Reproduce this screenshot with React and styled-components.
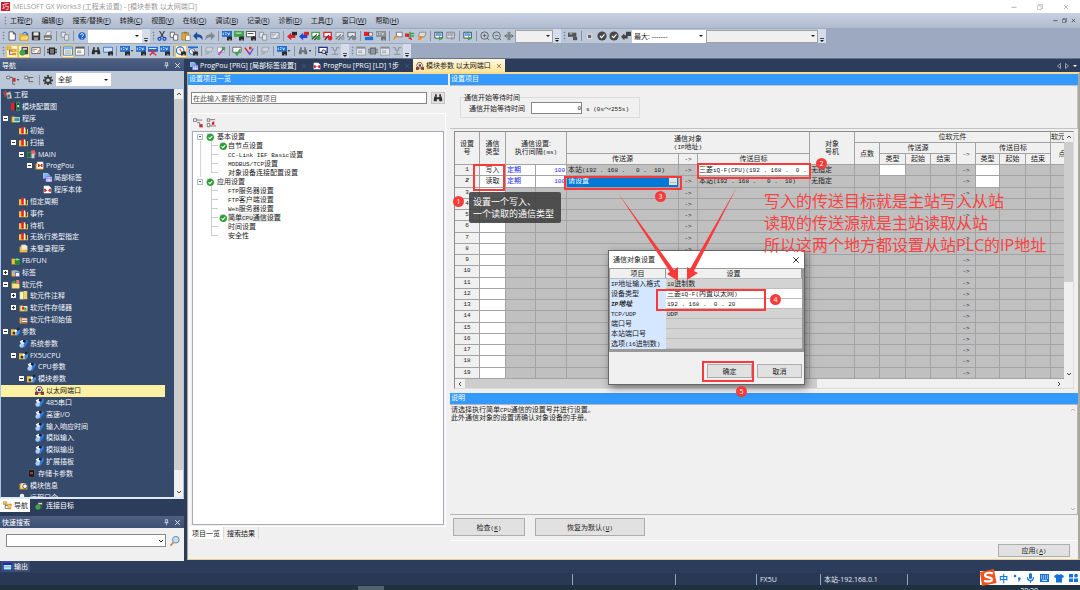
import React from 'react';
import styled, { createGlobalStyle, css } from 'styled-components';

const colors = {
  navy: '#2c3d5c',
  tree: '#364a6c',
  strip: '#bcc7d8',
  face: '#f0f0f0',
  blue: '#3399ff',
  line: '#a3a3a3',
  cell: '#c0c0c0',
  mark: '#f93a3a'
};

const uiFont = '"Open Sans", "Noto Sans CJK SC", sans-serif';
const formFont = '"Liberation Sans", "Noto Sans CJK SC", sans-serif';

const GlobalStyle = createGlobalStyle`
  * { box-sizing: border-box; }
  body { margin: 0; overflow: hidden; font: 7px/9px ${uiFont}; color: #1b1b1b; }
  button, input, select { font: inherit; color: inherit; margin: 0; padding: 0; border-radius: 0; }
  button { border: 0; background: none; cursor: pointer; white-space: nowrap; }
  ul { list-style: none; margin: 0; padding: 0; }
`;

/* ---------- icons ---------- */

const G = '#3fa34a';
const R = '#e0232b';
const B = '#1f6fd0';
const K = '#2d2d2d';
const Y = '#f5c242';

const binoculars = (
  <g fill={K}>
    <path d='M2 4h2.5v6H1V7zM7.5 4H10l1 3v3H7.5zM4.5 5h3v2.5h-3z' />
    <path d='M2.5 1.5h2V4h-2zM7.5 1.5h2V4h-2z' />
  </g>
);
const miniFind = <path d='M6 7h2v-1h1v1h1v-1h1v1h1v4.5h-2V9.5h-1v2H6z' fill={K} />;
const folder = <path d='M1 3.5h4l1 1h5V11H1z' fill={Y} stroke='#b98a1d' strokeWidth='.6' />;
const gear = (
  <g>
    <path d='M5 0h2v2l1.500.6L10 1.500 11 3 9.800 4.200l.5 1.300H12v2h-1.700l-.6 1.400L11 10.300 9.800 11.500 8.400 10.200 7 10.800V12H5v-1.300l-1.400-.5L2.200 11.500 1 10.200 2.200 8.800 1.700 7.500H0v-2h1.700l.6-1.400L1 2.800 2.300 1.500 3.600 2.700 5 2z' fill='#3a3a3a' />
    <circle cx='6' cy='6.300' r='2.200' fill={colors.strip} />
  </g>
);

const glyphs = {
  new: <path d='M2.5 1h5L10 3.500V11H2.5zM7.500 1v2.500H10' fill='#fff' stroke='#444' />,
  open: <g>{folder}<path d='M1 11l2-5h9l-2 5z' fill='#ffdb72' stroke='#b98a1d' strokeWidth='.6' /><path d='M4 4c1-4 5-4 6-1l1-.5-.5 3L8 4l1-.5C8 2 6 2 5 4z' fill={B} /></g>,
  save: <g><path d='M1 1h9l1 1v9H1z' fill='#333' /><path d='M3 1.500h6v4H3z' fill='#e8e8e8' /><path d='M3.500 7.500h5V11h-5z' fill='#999' /></g>,
  print: <g><path d='M3 5l2-4h5L8.500 5z' fill='#fff' stroke='#777' strokeWidth='.7' /><path d='M1 5h9.500l.5 4-2 2H1.500L1 9z' fill='#777' /><path d='M2 8h7v1.500H2z' fill='#eed' /></g>,
  pages: <g fill='#fff' stroke='#555'><path d='M1.500 1.500h5v6h-5z' /><path d='M5.500 4.500h5v6.500h-5z' /></g>,
  help: <g><circle cx='6' cy='6' r='5' fill='#1e5fc4' stroke='#fff' strokeWidth='.6' /><path d='M4.200 4.600C4.500 2.600 8 2.800 7.700 5 7.500 6 6 6 6 7.300M6 8.300v1.200' stroke='#fff' strokeWidth='1.200' fill='none' /></g>,
  cut: <g><path d='M3 0l5 8M9 0L4 8' stroke='#333' strokeWidth='1.300' /><circle cx='3' cy='9.300' r='1.800' fill='none' stroke='#1746c8' strokeWidth='1.500' /><circle cx='9' cy='9.300' r='1.800' fill='none' stroke='#1746c8' strokeWidth='1.500' /></g>,
  paste: <g><path d='M1 2h8v9H1z' fill='#e8a92b' stroke='#8a6419' strokeWidth='.6' /><path d='M3 1h4v2H3z' fill='#777' /><path d='M5.500 5H11v6.500H5.500z' fill='#fff' stroke='#555' strokeWidth='.7' /></g>,
  undo: <path d='M0 6l5-5v3c5 0 7 2.500 6.500 7C10 8 8 7.500 5 7.500V11z' fill='#1c4f9e' />,
  redo: <path d='M12 6L7 1v3C2 4 0 6.500.5 11 2 8 4 7.500 7 7.500V11z' fill='#555' />,
  devBlue: <g><path d='M0 0h12v7H0z' fill={B} /><path d='M1.500 2v3M3.500 2h2M3.500 4h2M7 2l1 3 1-3' stroke='#fff' fill='none' strokeWidth='.9' />{miniFind}</g>,
  devGreen: <g><path d='M0 0h12v7H0z' fill={G} /><path d='M2 2.500h7' stroke='#fff' />{miniFind}</g>,
  devWhite: <g><path d='M.5.5h11V7H.5z' fill='#fff' stroke='#333' /><path d='M2 3h7' stroke='#333' />{miniFind}</g>,
  arrowRed: <g><path d='M0 6.500L5 2v2.500h5v4H5V11z' fill={R} /><path d='M6 1h6v4H6z' fill='#2b2b2b' /></g>,
  arrowBlue: <g><path d='M0 6.500L5 2v2.500h5v4H5V11z' fill='#2444d8' /><path d='M6 1h6v4H6z' fill={R} /></g>,
  monGreen: <g><path d='M1 1.500h9V7H1z' fill='#fff' stroke={G} strokeWidth='1.500' /><path d='M1 10l6-6M4 11l6-6' stroke={K} strokeWidth='1.300' /><circle cx='9' cy='8.500' r='2.500' fill={G} /></g>,
  monRed: <g><path d='M1 1.500h9V7H1z' fill='#fff' stroke={R} strokeWidth='1.500' /><path d='M2 11l5-6' stroke={K} strokeWidth='1.300' /><circle cx='8.500' cy='8.500' r='2.800' fill={R} /></g>,
  redBlue: <g><path d='M0 1h6v5H0z' fill={R} /><path d='M6 2h4v4H6z' fill='#fff' stroke={K} strokeWidth='.7' /><path d='M1 7h10v4H1z' fill={B} /></g>,
  callout: <g><path d='M4 1.500h7V7H4z' fill='#fff' stroke='#666' /><path d='M0 11l2-5 5-1-3 3z' fill='#f28c1e' /></g>,
  plug: <g><path d='M0 3h5v4H0z' fill={R} /><path d='M6 1v8M6 3h5M6 6h5' stroke={G} strokeWidth='1.800' fill='none' /><path d='M3 8l5 3V8z' fill={R} /></g>,
  hand: <g><path d='M3 1.500h8L9 7H2z' fill='#ddd' stroke='#666' strokeWidth='.7' /><path d='M1 11l2-5h5l-3 4z' fill='#f28c1e' /></g>,
  screen: <g><path d='M1 1.500h9v7H1z' fill='#fff' stroke='#333' /><path d='M2 2.500h7v3.500H2z' fill='#5fa8e0' /><path d='M6 6l5 3-5 2.500z' fill={G} /></g>,
  zoomIn: <g fill='none' stroke='#555'><circle cx='5.500' cy='5.500' r='4.500' /><path d='M3.500 5.500h4M5.500 3.500v4M8.500 8.500L11 11' /></g>,
  zoomOut: <g fill='none' stroke='#555'><circle cx='5.500' cy='5.500' r='4.500' /><path d='M3.500 5.500h4M8.500 8.500L11 11' /></g>,
  fit: <g fill='none' stroke='#666' strokeWidth='1.200'><path d='M5 1v10M7 1v10M1 6h4M7 6h4M3 4L1 6l2 2M9 4l2 2-2 2' /></g>,
  camera: <g fill='#555'><path d='M0 2h10v5H0z' /><path d='M6 7h5v4H6z' /><path d='M2 3h3v1H2z' fill='#eee' /></g>,
  stop: <path d='M3 4h5v5H3z' fill='#666' stroke='#eee' />,
  check: <g><circle cx='6' cy='6' r='5.500' fill='#484848' /><path d='M3.500 6l2 2L9 4' stroke='#fff' fill='none' strokeWidth='1.300' /></g>,
  keys: <path d='M0 7l4-4v2h2V1h6v5H8v3H4v2z' fill='#444' />,
  nav: <g><path d='M0 1h5v3.500H0zM6 4h5v3H6z' fill={Y} stroke='#a87812' strokeWidth='.6' /><path d='M6 8.500h5V11H6z' fill='#d9902a' /><path d='M3 4.500V10h3M3 6h3' stroke='#444' fill='none' strokeWidth='.9' /></g>,
  link: <g><path d='M3 1h8v9H3z' fill='#444' /><path d='M4.500 2.500h5v2h-5z' fill='#ddd' /><circle cx='4' cy='8' r='3.500' fill={G} /></g>,
  note: <g><path d='M1 2h10v7H1z' fill='#fff' stroke='#555' /><path d='M2 4h5M2 6h3' stroke='#777' /><path d='M7 8l3-4 1 1-3 4z' fill='#f28c1e' /></g>,
  chip: <g><path d='M3 2.500h6v7H3z' fill='#777' stroke='#222' strokeWidth='1.300' /><path d='M0 4h3M0 6h3M0 8h3M9 4h3M9 6h3M9 8h3' stroke='#222' /></g>,
  list: <g><path d='M.5 1h11v10H.5z' fill='#fff' stroke={B} /><path d='M1 1.500h10v2.500H1z' fill='#7db7ee' /><path d='M2 6h8M2 8.500h8' stroke='#777' /></g>,
  list2: <g><path d='M.5 1h11v10H.5z' fill='#fff' stroke='#777' /><path d='M1 1.500h10V3H1z' fill='#333' /><path d='M2.500 6h5M2.500 8h5' stroke='#777' /></g>,
  bino: binoculars,
  binoList: <g><path d='M.5 1.500h11v6H.5z' fill='#cfe4f8' stroke={B} />{miniFind}</g>,
  devRed: <g><path d='M0 1h12v6H0z' fill={B} /><path d='M1 3h9' stroke='#fff' /><path d='M2 5l8 6M9 5l-7 6' stroke={R} strokeWidth='1.500' /></g>,
  clock: <g><circle cx='5' cy='5.500' r='4.500' fill='#fff' stroke={B} strokeWidth='1.300' /><path d='M5 3v3h2' stroke={R} fill='none' />{miniFind}</g>,
  clockList: <g><path d='M0 .5h12v2H0z' fill={B} /><circle cx='5' cy='6.500' r='3.500' fill='#fff' stroke={B} strokeWidth='1.200' /><path d='M5 4.500v2.500h2' stroke={R} fill='none' />{miniFind}</g>,
  pencil: <g><path d='M2 1.500h8v6H2z' fill='#fff' stroke='#a9b' /><path d='M2 10l6-7 2 1-6 7z' fill='#b94fc0' /><path d='M7 1h4v4H7z' fill={G} /></g>,
  tick: <g><path d='M1 1.500h10v6H1z' fill='#fff' stroke='#555' /><path d='M4 8l2 2.500L10 4' stroke={G} strokeWidth='2.200' fill='none' /></g>,
  cross: <g><path d='M1 2l6 8' stroke={R} strokeWidth='1.800' /><path d='M5 7l2 3 4-7' stroke='#6a4fd0' strokeWidth='1.600' fill='none' /><path d='M6 1h3v3H6z' fill={R} /></g>,
  find: <g><path d='M1 1.500h10v6H1z' fill='#fff' stroke='#26307c' strokeWidth='1.500' /><circle cx='7' cy='7' r='2.300' fill='#cde' stroke={K} /><path d='M8.500 8.500L11 11' stroke={K} strokeWidth='1.500' /></g>,
  steps: <path d='M1 2h3v3h4V2h3M6 5v5M2 10h8' fill='none' stroke='#555' />,
  treeRed: <g fill='none' stroke='#555'><path d='M1 1.500h3.500v3H1z' fill='#fff' /><path d='M5 3h3v8h3M8 7h2' /><path d='M8.500 3.500h3V8h-3z' fill={R} stroke='none' /></g>,
  treeGrey: <g fill='none' stroke='#555'><path d='M1 1.500h3.500v3H1z' fill='#fff' /><path d='M5 3h6M6 3v5h5' /></g>,
  expandAll: <g fill='none' stroke='#666'><path d='M.5 1h4v3h-4z' fill='#fff' /><path d='M5 2.500h6M5 5.500h3v5h4M8 8h3' /><path d='M8 7.500h3.500V11H8z' fill={R} stroke='none' /></g>,
  collapseAll: <g fill='none' stroke='#666'><path d='M1.500 1h3v3h-3zM1.500 6.500h3v4h-3z' fill='#fff' /><path d='M5 2h6M5 9.500h7' /><path d='M7 5l3-1v4L7 8z' fill={R} stroke='none' /></g>,
  gear,
  root: <g><path d='M0 3l4-3 2 7-3 3z' fill='#a44' /><path d='M4 4l6-2 2 9-6 1z' fill='#ccc' stroke='#666' strokeWidth='.6' /><path d='M6 6h3v4H6z' fill='#556' /></g>,
  modules: <g><path d='M0 1h5v10H0z' fill={R} /><path d='M5 1h2v10H5z' fill='#111' /><path d='M7 1h5v10H7z' fill='#153' stroke='#6d9' strokeWidth='.7' /><path d='M8.500 4h2v3h-2z' fill='#fff' /></g>,
  program: <g>{folder}<path d='M4 5h8v5H4z' fill='#2b9aac' stroke='#dff' strokeWidth='.9' /></g>,
  books: <g><path d='M0 3h4l1 1h7v7H0z' fill={Y} /><path d='M3 1h3.500v9H3z' fill={R} /><path d='M6.500 2h2v8h-2z' fill='#fff' /><path d='M9 3h1.500v7H9z' fill='#333' /></g>,
  main: <g><path d='M0 3h5v7H0z' fill='#163' stroke='#6b8' strokeWidth='.6' /><path d='M5 1l5-1 2 6-5 2z' fill='#e66' /><path d='M6 5h4v6H6z' fill='#ccc' /></g>,
  pou: <g>{folder}<path d='M3 1h8v9H3z' fill='#fff' /><path d='M4 4h2v4H4zM8 4h2v4H8zM6 5.500h2v1H6z' fill={R} /></g>,
  label: <g><path d='M0 0h6l3 3.500L6 7H0z' fill='#7fb4ec' stroke='#dff' strokeWidth='.5' /><path d='M4 5h8v7H4z' fill='#fff' stroke='#66e' /><path d='M4 7.500h8M6.500 5v7M9.500 5v7' stroke='#66e' strokeWidth='.8' /></g>,
  body: <g><path d='M1 1h7l3 3v7H1z' fill='#fff' /><path d='M1.500 5H4v4H1.500zM8 5h2.500v4H8zM4 6.500h1.500v1H4zM6.500 6.500H8v1H6.500z' fill={R} /></g>,
  folder: <g>{folder}<path d='M3 1h6l2 2v5H3z' fill='#f6efd8' stroke='#998' strokeWidth='.5' /></g>,
  fb: <g>{folder}<path d='M5 5l3-2 4 2v5l-4 2-3-2z' fill='#1d8a3a' /><path d='M5 5l3 1 4-1-4-2z' fill='#8d8' /></g>,
  labels: <g>{folder}<path d='M3 3h5l3 3-2 2H3z' fill='#7fb4ec' /><path d='M6 6h5.500v5.500H6z' fill='#fff' stroke='#33c' strokeWidth='.8' /></g>,
  device: <g>{folder}<path d='M2 1h4v4H2z' fill={G} /><path d='M7 0h4v4H7z' fill='#e77' /><path d='M2 5h9v6H2z' fill='#f9e38b' /></g>,
  comment: <g><path d='M1 1h5v10H1z' fill='#fff6c0' stroke='#a98' strokeWidth='.5' /><path d='M6 0h5v11H6z' fill='#f3d266' /></g>,
  memory: <g>{folder}<path d='M3 4h8v6H3z' fill='#eee' /><path d='M4 5h3v4H4z' fill={R} /><path d='M7 6h3v4H7z' fill={G} /></g>,
  initial: <g>{folder}<path d='M3 4h8v6H3z' fill='#fff' stroke='#a33' strokeWidth='.9' /><path d='M4 7h6' stroke='#333' /></g>,
  params: <g><path d='M0 3h4l1 1h3v7H0z' fill={Y} /><path d='M5 3l3 1-1 5-3-1z' fill='#fff' /><path d='M7 6l5-2v4l-4 4z' fill='#3d8af0' /><path d='M8 1h3v3H8z' fill='#222' /><circle cx='4' cy='8' r='2' fill='#333' /></g>,
  param: <g><path d='M6 4l5-3 1 3-5 8-2-2z' fill='#2f7be6' /><path d='M1 3l4-2 2 5-3 3z' fill='#f1f5ff' /><circle cx='3.500' cy='8.500' r='3' fill='#a9cdf5' /><circle cx='7' cy='3' r='1.800' fill='#1a1a1a' /></g>,
  ether: <g><path d='M3 1h5l2 4-2 4H3L1 5z' fill='#fff' stroke='#843' strokeWidth='1.300' /><path d='M0 8h4v3.500H0zM8 8h4v3.500H8z' fill='#a33' stroke='#333' strokeWidth='.6' /><path d='M4 3.500h3.500v3.500H4z' fill='#444' /></g>,
  card: <g><path d='M2 1h8v10H2z' fill='#1a1a1a' stroke='#777' strokeWidth='.6' /><path d='M4 4h4v3H4z' fill='#944' /></g>,
  info: <g>{folder}<path d='M3 3h6v6H3z' fill='#eee' /><circle cx='8' cy='7' r='3' fill='#fff' stroke='#333' /></g>,
  key: <g><circle cx='4' cy='4' r='3' fill='#eee' /><path d='M5 6l5 5' stroke='#eee' strokeWidth='2' /><path d='M7 6h4v3H7z' fill={G} /></g>,
  ok: <g><path d='M1 0h8v9H1z' fill='#ddd' /><circle cx='6.500' cy='6.500' r='5.500' fill='#2e9e3c' /><path d='M3.800 6.500l2 2 3.500-3.800' stroke='#fff' fill='none' strokeWidth='1.600' /></g>,
  window: <g><path d='M0 1h12v10H0z' fill='#22c' /><path d='M1 4h10v6H1z' fill='#9ff' /><path d='M1 6.500h10' stroke='#c66' /></g>,
  search: <g><circle cx='7' cy='4.500' r='4' fill='#bfe0f7' stroke='#789' strokeWidth='1.200' /><path d='M4 8l-3.500 3.500' stroke='#c98a54' strokeWidth='2.200' /></g>,
  pin: <path d='M4 1h4v5H4zM2.500 6.500h7M6 7v4M7 1v5' fill='none' stroke='#dfe5ef' strokeWidth='1.100' />,
  close: <path d='M2 2l8 8M10 2l-8 8' stroke='currentColor' strokeWidth='1.400' />,
  minimize: <path d='M1 6.500h10' stroke='currentColor' strokeWidth='1.500' />,
  restore: <path d='M1 3.500h7.500V11H1zM3 3.500V1h8v8H8.500' fill='none' stroke='currentColor' />,
  down: <path d='M2 4h8L6 8z' fill='currentColor' />,
  more: <path d='M2 2h8v1.500H2zM2 6h8l-4 4z' fill='currentColor' />,
  up: <path d='M2 8l4-4 4 4' fill='none' stroke='currentColor' strokeWidth='2' />,
  chevron: <path d='M2 4l4 4 4-4' fill='none' stroke='currentColor' strokeWidth='2' />,
  left: <path d='M8 2L4 6l4 4' fill='none' stroke='currentColor' strokeWidth='2' />,
  right: <path d='M4 2l4 4-4 4' fill='none' stroke='currentColor' strokeWidth='2' />,
  triLeft: <path d='M9 1v10L3 6z' fill='none' stroke='currentColor' />,
  triRight: <path d='M3 1v10l6-5z' fill='none' stroke='currentColor' />
};

const Svg = styled.svg`
  display: block;
  flex: none;
  width: ${props => props.$size}px;
  height: ${props => props.$size}px;
  ${props => props.$dim && 'filter: grayscale(1); opacity: .55;'}
`;

const Icon = ({ name, size = 10, dim }) => (
  <Svg viewBox='0 0 12 12' $size={size} $dim={dim} aria-hidden='true'>{glyphs[name]}</Svg>
);

/* ---------- half-width latin inside chinese text ---------- */

const Half = styled.span`
  font-family: "Liberation Mono", monospace;
  font-size: 6px;
  line-height: 6px;
  white-space: pre;
`;

const Mixed = ({ text }) => text.split(/([\x20-\x7e]+)/).filter(Boolean).map((part, i) => (
  /[\x20-\x7e]/.test(part) ? <Half key={i}>{part}</Half> : <React.Fragment key={i}>{part}</React.Fragment>
));

/* ---------- frame ---------- */

const Window = styled.div`
  position: relative;
  display: flex;
  flex-direction: column;
  height: 100vh;
  background: ${colors.navy};
  overflow: hidden;
  white-space: nowrap;
`;

const TitleBar = styled.header`
  display: flex;
  align-items: center;
  gap: 3px;
  height: 13px;
  flex: none;
  padding: 0 11px 0 1px;
  background: #fff;
  color: #999;
`;

const AppBadge = styled.span`
  display: grid;
  place-items: center;
  width: 9px;
  height: 9px;
  background: #c8202f;
  color: #fff;
`;

const WindowButtons = styled.div`
  display: flex;
  align-items: center;
  margin-left: auto;
  gap: ${props => props.$gap}px;
`;

const MenuBar = styled.nav`
  display: flex;
  align-items: center;
  gap: 9px;
  height: 15px;
  flex: none;
  padding: 0 4px 0 2px;
  background: linear-gradient(#c8d1e0, #b0bbcf);
`;

const Grip = styled.span`
  flex: none;
  width: 6px;
  height: 10px;
  background: radial-gradient(circle, #7b8799 40%, transparent 50%) 50% 0 / 3px 3px repeat-y;
`;

const Toolbars = styled.div`
  display: flex;
  flex-direction: column;
  align-items: flex-start;
  gap: 1px;
  height: 31px;
  flex: none;
  padding: 1px 0;
  background: #9ca9c1;
  border-bottom: 1px solid #66738e;
`;

const Toolbar = styled.div`
  display: flex;
  align-items: center;
  height: 14px;
  background: ${colors.strip};
`;

const ToolButton = styled.button`
  display: flex;
  align-items: center;
  justify-content: center;
  width: ${props => (props.$menu ? 17 : 12)}px;
  height: 13px;
  ${props => props.$active && css`
    background: #fff3cc;
    box-shadow: inset 0 0 0 1px #e5c365;
  `}
`;

const Separator = styled.span`
  width: 1px;
  height: 10px;
  margin: 0 ${props => props.$after}px 0 2px;
  background: #8592a8;
`;

const Overflow = styled.button`
  display: flex;
  align-items: flex-end;
  justify-content: center;
  width: 8px;
  height: 14px;
  background: #d5dcea;
`;

const ComboBox = styled.div`
  position: relative;
  display: flex;
  align-items: center;
  width: ${props => (props.$width ? props.$width + 'px' : 'auto')};
  flex: ${props => (props.$width ? 'none' : '1')};
  height: 13px;
  background: ${props => (props.$grey ? colors.face : '#fff')};
  border: 1px solid ${props => (props.$grey ? '#a0a0a0' : props.$edge || '#fff')};

  select {
    width: 100%;
    height: 100%;
    appearance: none;
    border: 0;
    background: none;
    padding-left: 1px;
    outline: none;
  }
  svg {
    position: absolute;
    right: 1px;
    pointer-events: none;
  }
`;

const Combo = ({ label, value = '', icon = 'down', ...rest }) => (
  <ComboBox {...rest}>
    <select aria-label={label}><option>{value}</option></select>
    <Icon name={icon} size={6} />
  </ComboBox>
);

// * pressed, ~ disabled, > has a menu
const Tools = ({ items, gap = 2 }) => items.split(' ').map((item, i) => {
  if (item === '|') return <Separator key={i} $after={gap} />;
  const name = item.replace(/[*~>]/g, '');
  const menu = item.includes('>');
  return (
    <ToolButton key={i} $active={item.includes('*')} $menu={menu} aria-label={name}>
      <Icon name={name} size={10} dim={item.includes('~')} />
      {menu && <Icon name='down' size={4} />}
    </ToolButton>
  );
});

const More = () => <Overflow aria-label='more'><Icon name='more' size={6} /></Overflow>;

const Workspace = styled.div`
  display: flex;
  gap: 3px;
  flex: 1;
  min-height: 0;
`;

/* ---------- navigation ---------- */

const Sidebar = styled.aside`
  display: flex;
  flex-direction: column;
  width: 184px;
  flex: none;
`;

const PanelHeader = styled.div`
  display: flex;
  align-items: center;
  gap: 4px;
  height: 12px;
  flex: none;
  padding: 0 3px 0 2px;
  background: linear-gradient(#4d6082, #3e5075);
  color: #fff;

  span { flex: 1; }
`;

const NavTools = styled.div`
  display: flex;
  align-items: center;
  gap: 2px;
  height: 17px;
  flex: none;
  padding: 0 4px;
  background: ${colors.strip};
`;

const TreeFrame = styled.div`
  display: flex;
  flex: 1;
  min-height: 0;
  border: 1px solid #a9c3e8;
  border-bottom: 2px solid #dfe9f7;
  background: ${colors.tree};
`;

const TreeView = styled.div`
  flex: 1;
  min-height: 0;
  overflow: hidden;
`;

const NavTree = styled.ul`
  display: grid;
  grid-auto-rows: 1fr;
  height: calc(100% + 6px);
  color: #f2f5fa;
`;

const NavItem = styled.li`
  display: flex;
  align-items: center;
  gap: 2px;
  margin-right: 9px;
  padding-left: ${props => 2 + 8 * Math.max(0, props.$level - 1)}px;
  ${props => props.$selected && 'background: #fff1a4; color: #222;'}
`;

const Expander = styled.span`
  flex: none;
  width: 5px;
  height: 5px;
  margin-right: 1px;
  ${props => props.$open !== undefined && css`
    background:
      linear-gradient(#333, #333) center / 3px 1px no-repeat,
      linear-gradient(#333, #333) center / 1px ${props.$open ? 1 : 3}px no-repeat,
      #fff;
  `}
`;

// [level, icon, text, open]
const navRows = [
  [0, 'root', '工程'],
  [1, 'modules', '模块配置图'],
  [1, 'program', '程序', true],
  [2, 'books', '初始'],
  [2, 'books', '扫描', true],
  [3, 'main', 'MAIN', true],
  [4, 'pou', 'ProgPou', true],
  [5, 'label', '局部标签'],
  [5, 'body', '程序本体'],
  [2, 'books', '恒定周期'],
  [2, 'books', '事件'],
  [2, 'books', '待机'],
  [2, 'books', '无执行类型指定'],
  [2, 'folder', '未登录程序'],
  [1, 'fb', 'FB/FUN'],
  [1, 'labels', '标签', false],
  [1, 'device', '软元件', true],
  [2, 'comment', '软元件注释', false],
  [2, 'memory', '软元件存储器', false],
  [2, 'initial', '软元件初始值'],
  [1, 'params', '参数', true],
  [2, 'param', '系统参数'],
  [2, 'params', 'FX5UCPU', true],
  [3, 'param', 'CPU参数'],
  [3, 'params', '模块参数', true],
  [4, 'ether', '以太网端口'],
  [4, 'param', '485串口'],
  [4, 'param', '高速I/O'],
  [4, 'param', '输入响应时间'],
  [4, 'param', '模拟输入'],
  [4, 'param', '模拟输出'],
  [4, 'param', '扩展插板'],
  [3, 'card', '存储卡参数'],
  [2, 'info', '模块信息'],
  [2, 'key', '远程口令']
];

const ScrollBar = styled.div`
  display: flex;
  flex-direction: ${props => (props.$horizontal ? 'row' : 'column')};
  align-items: center;
  gap: 2px;
  flex: none;
  ${props => (props.$horizontal ? 'height: 9px; padding: 0 2px; margin-right: 9px;' : 'width: 9px; padding: 2px 0;')}
  background: ${colors.face};
  color: ${props => (props.$faint ? '#bbb' : '#444')};
`;

const Thumb = styled.span`
  flex: ${props => props.$grow};
  align-self: stretch;
  background: #cdcdcd;
`;

const Track = styled.span`
  flex: ${props => props.$grow};
`;

const Scroll = ({ thumb = 0, horizontal, faint }) => (
  <ScrollBar $horizontal={horizontal} $faint={faint}>
    <Icon name={horizontal ? 'left' : 'up'} size={6} />
    {thumb > 0 && <Thumb $grow={thumb} />}
    {thumb < 100 && <Track $grow={100 - thumb} />}
    <Icon name={horizontal ? 'right' : 'chevron'} size={6} />
  </ScrollBar>
);

const BottomTabs = styled.div`
  display: flex;
  height: 13px;
  flex: none;
  margin-bottom: 4px;
`;

const BottomTab = styled.button`
  display: flex;
  align-items: center;
  gap: 2px;
  padding: 0 2px 0 3px;
  margin-right: 2px;
  background: ${props => (props.$active ? '#fff' : 'none')};
  color: ${props => (props.$active ? '#222' : '#fff')};
`;

const QuickSearch = styled.form`
  display: flex;
  align-items: flex-start;
  gap: 3px;
  height: 33px;
  flex: none;
  padding: 6px 3px 0 6px;
  background: ${colors.face};
`;

const NavPanel = () => (
  <Sidebar>
    <PanelHeader><span>导航</span><Icon name='pin' size={7} /><Icon name='close' size={7} /></PanelHeader>
    <NavTools>
      <Tools items='treeRed> treeGrey' />
      <Separator $after={0} />
      <Tools items='gear' />
      <Combo label='显示对象' value='全部' $width={55} />
    </NavTools>
    <TreeFrame>
      <TreeView>
        <NavTree>
          {navRows.map(([level, icon, text, open]) => (
            <NavItem key={text} $level={level} $selected={text === '以太网端口'}>
              {level > 0 && <Expander $open={open} />}
              <Icon name={icon} size={9} />
              {text}
            </NavItem>
          ))}
        </NavTree>
      </TreeView>
      <Scroll thumb={96} />
    </TreeFrame>
    <BottomTabs>
      <BottomTab $active><Icon name='nav' size={9} />导航</BottomTab>
      <BottomTab><Icon name='link' size={9} />连接目标</BottomTab>
    </BottomTabs>
    <PanelHeader><span>快速搜索</span><Icon name='pin' size={7} /><Icon name='close' size={7} /></PanelHeader>
    <QuickSearch>
      <Combo label='快速搜索' icon='chevron' $edge='#888' />
      <ToolButton type='button' aria-label='搜索'><Icon name='search' size={10} /></ToolButton>
    </QuickSearch>
  </Sidebar>
);

/* ---------- document area ---------- */

const Documents = styled.main`
  display: flex;
  flex-direction: column;
  flex: 1;
  min-width: 0;
  padding-bottom: 1px;
`;

const DocTabs = styled.div`
  display: flex;
  height: 13px;
  flex: none;
  padding-right: 2px;
  color: #fff;
`;

const DocTab = styled.button`
  display: flex;
  align-items: center;
  gap: 2px;
  height: 13px;
  padding: 0 3px;
  ${props => props.$active && 'background: linear-gradient(#fff8e0, #fde59b); color: #222;'}

  > :last-child { margin-left: 3px; color: ${props => (props.$active ? '#6d5a2a' : '#485a7c')}; }
`;

const Page = styled.section`
  display: flex;
  flex-direction: column;
  flex: 1;
  min-height: 0;
  background: ${colors.face};
  border: 1px solid #aaa79b;
  border-width: 1px 2px 1px 1px;
  border-top: 2px solid #f7dc92;
  border-bottom-color: #e8cf83;
  font-family: ${formFont};
`;

const Panes = styled.div`
  display: flex;
  gap: 2px;
  flex: 1;
  min-height: 0;
`;

const BlueTitle = styled.h2`
  height: 11px;
  flex: none;
  margin: 0;
  padding: 0 1px;
  background: ${colors.blue};
  color: #fff;
  font-size: 7px;
  line-height: 10px;
  font-weight: 400;
`;

const ItemPane = styled.div`
  display: flex;
  flex-direction: column;
  width: 260px;
  flex: none;
`;

const SearchRow = styled.div`
  display: flex;
  align-items: center;
  gap: 4px;
  padding: 7px 3px 9px 3px;

  input {
    flex: 1;
    height: 12px;
    padding: 0 1px;
    border: 1px solid #858585;
    background: #fff;
    outline: none;
  }
  input::placeholder { color: #555; opacity: 1; }
`;

const FindButton = styled.button`
  display: grid;
  place-items: center;
  width: 14px;
  height: 12px;
  background: #e1e1e1;
  border: 1px solid #c4c4c4;
`;

const TabPage = styled.div`
  display: flex;
  flex-direction: column;
  flex: 1;
  min-height: 0;
  margin: 0 2px 0 1px;
  padding: 0 1px 1px 2px;
  border: 1px solid #fff;
`;

const ItemTools = styled.div`
  display: flex;
  align-items: center;
  gap: 1px;
  height: 17px;
`;

const SettingTree = styled.ul`
  flex: 1;
  border: 1px solid #a7abb3;
  background: #fff;
`;

const SettingItem = styled.li`
  display: flex;
  align-items: center;
  height: 9px;
  padding-left: ${props => (props.$root ? 4 : 7)}px;
  gap: ${props => (props.$root ? 3 : 0)}px;
`;

const Knob = styled.span`
  width: 6px;
  height: 6px;
  border: 1px solid #b4bcc8;
  background: linear-gradient(#456, #456) center / 2px 1px no-repeat #fff;
`;

const Rail = styled.span`
  width: 11px;
  height: 9px;
  border-left: 1px solid ${props => (props.$line ? '#d5d5d5' : 'transparent')};
`;

const Branch = styled.span`
  width: 8px;
  height: 9px;
  background:
    linear-gradient(#ccc, #ccc) 0 50% / 7px 1px no-repeat,
    linear-gradient(#ccc, #ccc) 0 0 / 1px ${props => (props.$last ? '50%' : '100%')} no-repeat;
`;

const StateSlot = styled.span`
  width: 9px;
`;

const ItemText = styled.span`
  background: ${props => (props.$current ? '#ececec' : 'none')};
`;

const groups = [
  { title: '基本设置', items: ['自节点设置', 'CC-Link IEF Basic设置', 'MODBUS/TCP设置', '对象设备连接配置设置'] },
  { title: '应用设置', items: ['FTP服务器设置', 'FTP客户端设置', 'Web服务器设置', '简单CPU通信设置', '时间设置', '安全性'] }
];
const configured = ['自节点设置', '简单CPU通信设置'];

const PageTabs = styled.div`
  display: flex;
  height: 12px;
  flex: none;
  margin: 0 0 20px 1px;
`;

const PageTab = styled.button`
  padding: 0 3px;
  background: ${props => (props.$active ? '#fff' : 'none')};
  border-right: 1px solid #dadada;
`;

const SettingList = () => (
  <ItemPane>
    <BlueTitle>设置项目一览</BlueTitle>
    <SearchRow>
      <input aria-label='搜索设置项目' placeholder='在此输入要搜索的设置项目' />
      <FindButton aria-label='查找'><Icon name='bino' size={10} /></FindButton>
    </SearchRow>
    <TabPage>
      <ItemTools><Tools items='expandAll collapseAll' /></ItemTools>
      <SettingTree>
        {groups.map((group, g) => (
          <React.Fragment key={group.title}>
            <SettingItem $root><Knob /><Icon name='ok' size={8} /><ItemText>{group.title}</ItemText></SettingItem>
            {group.items.map((item, i) => (
              <SettingItem key={item}>
                <Rail $line={g === 0} />
                <Branch $last={i === group.items.length - 1} />
                <StateSlot>{configured.includes(item) && <Icon name='ok' size={8} />}</StateSlot>
                <ItemText $current={item === '简单CPU通信设置'}><Mixed text={item} /></ItemText>
              </SettingItem>
            ))}
          </React.Fragment>
        ))}
      </SettingTree>
    </TabPage>
    <PageTabs>
      <PageTab $active>项目一览</PageTab>
      <PageTab>搜索结果</PageTab>
    </PageTabs>
  </ItemPane>
);

const DetailPane = styled.div`
  display: flex;
  flex-direction: column;
  flex: 1;
  min-width: 0;
`;

const WaitArea = styled.div`
  height: 44px;
  flex: none;
  padding: 7px 9px 0 10px;
  border: 1px solid #c3c3c3;
  border-width: 1px 1px 1px 0;
`;

const WaitGroup = styled.fieldset`
  width: 180px;
  margin: 0;
  padding: 0 8px 3px;
  border: 1px solid #dcdcdc;

  legend { margin-left: -5px; padding: 0; line-height: 9px; }
`;

const WaitRow = styled.div`
  display: flex;
  align-items: center;
  gap: 4px;

  label { width: 58px; }
  input {
    width: 51px;
    height: 12px;
    border: 1px solid #858585;
    background: #fff;
    text-align: right;
    font-family: "Liberation Mono", monospace;
    font-size: 6px;
  }
`;

const GridArea = styled.div`
  display: flex;
  flex-direction: column;
  flex: 1;
  min-height: 0;
  margin: 2px 4px 4px 4px;
  border: 1px solid #8b8b8b;
  border-right-color: #ddd;
  border-bottom-color: #ddd;
`;

const GridBody = styled.div`
  display: flex;
  flex: 1;
  min-height: 0;
`;

const GridView = styled.div`
  flex: 1;
  min-width: 0;
  overflow: hidden;
  background: ${colors.cell};
`;

const Grid = styled.table`
  width: 626px;
  height: 100%;
  table-layout: fixed;
  border-collapse: separate;
  border-spacing: 0;
  line-height: 8px;

  th, td {
    padding: 0;
    border: 1px solid ${colors.line};
    border-width: 0 1px 1px 0;
    overflow: hidden;
    font-weight: 400;
    text-align: center;
  }
  thead th { height: 11px; background: ${colors.face}; }
  tbody th { background: ${colors.face}; }
`;

const Cell = styled.td`
  && {
    padding: 0 1px;
    text-align: ${props => props.$align || 'center'};
    ${props => props.$white && 'background: #fff;'}
    ${props => props.$blue && 'color: #2222f0;'}
    ${props => props.$selected && 'background: #0078d7; color: #fff;'}
  }
`;

const ClippedHead = styled.th`
  && { text-align: left; }
`;

const RowNumber = styled.th`
  && { font: ${props => (props.$current ? 'italic 700' : '400')} 6px/8px "Liberation Mono", monospace; }
`;

const PickCell = styled.div`
  display: flex;
  justify-content: space-between;

  button { width: 8px; height: 8px; background: #e4e4e4; color: #222; line-height: 6px; }
`;

const widths = [25, 26, 30, 31, 112, 19, 112, 45, 25, 26, 25, 26, 19, 24, 26, 25, 30];
const numbers = Array.from({ length: 19 }, (_, i) => i + 1);

const rowData = {
  1: {
    type: '写入',
    source: '本站(192 . 168 .   0 .  10)',
    target: '三菱iQ-F(CPU)(192 . 168 .  0 .'
  },
  2: { type: '读取', source: '', target: '本站(192 . 168 .   0 .  10)' }
};

const GridRow = ({ n }) => {
  const row = rowData[n];
  return (
    <tr>
      <RowNumber $current={n === 2}>{n}</RowNumber>
      <Cell $white>{row && row.type}</Cell>
      <Cell $white={!!row} $blue $align='left'>{row && '定期'}</Cell>
      <Cell $white={!!row} $blue $align='right'>{row && <Half>100</Half>}</Cell>
      {n === 2 ? (
        <Cell $selected $align='left'><PickCell>请设置<button aria-label='设置通信对象'>…</button></PickCell></Cell>
      ) : (
        <Cell $align='left'>{row && <Mixed text={row.source} />}</Cell>
      )}
      <Cell><Half>-&gt;</Half></Cell>
      <Cell $align='left' $white={n === 1}>{row && <Mixed text={row.target} />}</Cell>
      <Cell $align='left'>{row && '无指定'}</Cell>
      <Cell />
      <Cell $white={n === 1} />
      <Cell />
      <Cell />
      <Cell><Half>-&gt;</Half></Cell>
      <Cell $white={!!row} />
      <Cell />
      <Cell />
      <Cell />
    </tr>
  );
};

const SettingGrid = () => (
  <Grid>
    <colgroup>{widths.map((w, i) => <col key={i} width={w} />)}</colgroup>
    <thead>
      <tr>
        <th rowSpan={3}>设置<br />号</th>
        <th rowSpan={3}>通信<br />类型</th>
        <th rowSpan={3} colSpan={2}>通信设置:<br />执行间隔<Half>(ms)</Half></th>
        <th rowSpan={2} colSpan={3}>通信对象<br /><Mixed text='(IP地址)' /></th>
        <th rowSpan={3}>对象<br />号机</th>
        <th colSpan={8}>位软元件</th>
        <ClippedHead>软元件</ClippedHead>
      </tr>
      <tr>
        <th rowSpan={2}>点数</th>
        <th colSpan={3}>传送源</th>
        <th rowSpan={2}><Half>-&gt;</Half></th>
        <th colSpan={3}>传送目标</th>
        <th rowSpan={2}>点数</th>
      </tr>
      <tr>
        <th>传送源</th>
        <th><Half>-&gt;</Half></th>
        <th>传送目标</th>
        <th>类型</th>
        <th>起始</th>
        <th>结束</th>
        <th>类型</th>
        <th>起始</th>
        <th>结束</th>
      </tr>
    </thead>
    <tbody>{numbers.map(n => <GridRow key={n} n={n} />)}</tbody>
  </Grid>
);

const Description = styled.div`
  display: flex;
  height: 111px;
  flex: none;
  border: 1px solid #b5b5b5;
  border-left: 0;
  line-height: 7px;

  p { flex: 1; margin: 0; padding: 1px; }
`;

const ButtonRow = styled.div`
  display: flex;
  gap: 10px;
  height: 25px;
  flex: none;
  padding: 3px 3px 4px;
`;

const PushButton = styled.button`
  width: ${props => props.$width}px;
  background: #e1e1e1;
  border: 1px solid #adadad;
`;

const Footer = styled.div`
  display: flex;
  justify-content: flex-end;
  height: 19px;
  flex: none;
  padding: 3px 8px 2px;
  border-top: 1px solid #fff;
`;

const SettingDetail = () => (
  <DetailPane>
    <BlueTitle>设置项目</BlueTitle>
    <WaitArea>
      <WaitGroup>
        <legend>通信开始等待时间</legend>
        <WaitRow>
          <label htmlFor='wait-time'>通信开始等待时间</label>
          <input id='wait-time' defaultValue='0' />
          <span><Mixed text='s (0s～255s)' /></span>
        </WaitRow>
      </WaitGroup>
    </WaitArea>
    <GridArea>
      <GridBody>
        <GridView><SettingGrid /></GridView>
        <Scroll thumb={62} />
      </GridBody>
      <Scroll thumb={60} horizontal />
    </GridArea>
    <BlueTitle>说明</BlueTitle>
    <Description>
      <p>
        <Mixed text='请选择执行简单CPU通信的设置号并进行设置。' /><br />
        此外通信对象的设置请确认对象设备的手册。
      </p>
      <Scroll faint />
    </Description>
    <ButtonRow>
      <PushButton $width={72}>检查<Half>(<u>K</u>)</Half></PushButton>
      <PushButton $width={110}>恢复为默认<Half>(<u>U</u>)</Half></PushButton>
    </ButtonRow>
    <Footer><PushButton $width={72}>应用<Half>(<u>A</u>)</Half></PushButton></Footer>
  </DetailPane>
);

/* ---------- dialog ---------- */

const Dialog = styled.section`
  position: absolute;
  left: 608px;
  top: 250px;
  width: 197px;
  height: 135px;
  background: ${colors.face};
  border: 1px solid #666;
  box-shadow: 2px 3px 8px rgba(0, 0, 0, .45);
  font-family: ${formFont};
`;

const DialogTitle = styled.div`
  display: flex;
  align-items: center;
  justify-content: space-between;
  height: 17px;
  padding: 0 4px;
  background: #fff;
`;

const PropertyTable = styled.table`
  width: 100%;
  table-layout: fixed;
  border-collapse: separate;
  border-spacing: 0;
  border: 1px solid #999;
  border-width: 0 2px 3px 1px;
  line-height: 8px;

  th, td { height: 10px; padding: 0 1px; text-align: left; font-weight: 400; border-bottom: 1px solid #bdbdbd; }
  thead th { height: 11px; text-align: center; border-right: 1px solid #999; border-top: 1px solid #999; }
  thead th:first-child { width: 56px; }
  tbody th { background: #d5e6ff; border-color: #d5e6ff; }
`;

const PropertyRow = styled.tr`
  td { background: ${props => (props.$editable ? '#fff' : '#d3d3d3')}; }
  && th { ${props => props.$current && 'font-weight: 700; font-style: italic;'} }
`;

const DialogButtons = styled.div`
  display: flex;
  justify-content: flex-end;
  gap: 5px;
  height: 14px;
  margin: 12px 2px 0;
`;

const properties = [
  ['IP地址输入格式', '10进制数'],
  ['设备类型', '三菱iQ-F(内置以太网)', true],
  ['IP地址', '192 . 168 .  0 . 20', true],
  ['TCP/UDP', 'UDP'],
  ['端口号', ''],
  ['本站端口号', ''],
  ['选项(16进制数)', '']
];

const TargetDialog = () => (
  <Dialog role='dialog' aria-label='通信对象设置'>
    <DialogTitle>通信对象设置<button aria-label='关闭'><Icon name='close' size={8} /></button></DialogTitle>
    <PropertyTable>
      <thead><tr><th>项目</th><th>设置</th></tr></thead>
      <tbody>
        {properties.map(([name, value, editable]) => (
          <PropertyRow key={name} $editable={editable} $current={name === 'IP地址'}>
            <th scope='row'><Mixed text={name} /></th>
            <td><Mixed text={value} /></td>
          </PropertyRow>
        ))}
      </tbody>
    </PropertyTable>
    <DialogButtons>
      <PushButton $width={45}>确定</PushButton>
      <PushButton $width={45}>取消</PushButton>
    </DialogButtons>
  </Dialog>
);

/* ---------- notes drawn over the window ---------- */

const MarkBox = styled.div`
  position: absolute;
  left: ${props => props.$x}px;
  top: ${props => props.$y}px;
  width: ${props => props.$w}px;
  height: ${props => props.$h}px;
  border: 2px solid ${colors.mark};
`;

const Badge = styled.span`
  position: absolute;
  left: ${props => props.$x}px;
  top: ${props => props.$y}px;
  display: grid;
  place-items: center;
  width: 11px;
  height: 11px;
  border-radius: 50%;
  background: ${colors.mark};
  color: #fff;
`;

const TypeNote = styled.p`
  position: absolute;
  left: 469px;
  top: 192px;
  margin: 0;
  padding: 4px 7px 3px 4px;
  border-radius: 2px;
  background: rgba(62, 62, 62, .88);
  color: #fff;
  font-size: 9px;
  line-height: 12px;
`;

const MainNote = styled.p`
  position: absolute;
  left: 764px;
  top: 190px;
  margin: 0;
  color: #f94343;
  font-size: 16px;
  line-height: 22px;
`;

const Arrows = styled.svg`
  position: absolute;
  left: 610px;
  top: 180px;
  width: 130px;
  height: 105px;
  fill: ${colors.mark};
`;

const Annotations = () => (
  <React.Fragment>
    <TypeNote>设置一个写入、<br />一个读取的通信类型</TypeNote>
    <MainNote>
      写入的传送目标就是主站写入从站<br />
      读取的传送源就是主站读取从站<br />
      所以这两个地方都设置从站PLC的IP地址
    </MainNote>
    <Arrows viewBox='0 0 130 105' aria-hidden='true'>
      <path d='M8 13L64 90l4-3 0 14-11-7 3-2z' />
      <path d='M127 7L84 91l4 2-11 7 0-13 3 2z' />
    </Arrows>
    <MarkBox $x={473} $y={164} $w={32} $h={27} />
    <MarkBox $x={564} $y={176} $w={118} $h={14} />
    <MarkBox $x={697} $y={163} $w={114} $h={16} />
    <MarkBox $x={656} $y={289} $w={110} $h={22} />
    <MarkBox $x={702} $y={361} $w={52} $h={21} />
    <Badge $x={453} $y={196}>1</Badge>
    <Badge $x={816} $y={158}>2</Badge>
    <Badge $x={655} $y={191}>3</Badge>
    <Badge $x={770} $y={294}>4</Badge>
    <Badge $x={736} $y={386}>5</Badge>
  </React.Fragment>
);

/* ---------- bottom bars ---------- */

const OutputBar = styled.div`
  height: 12px;
  flex: none;
  padding-left: 1px;

  button { display: flex; align-items: center; gap: 2px; height: 11px; padding: 0 2px; background: #3d4f72; color: #fff; }
`;

const StatusBar = styled.footer`
  display: flex;
  justify-content: flex-end;
  height: 12px;
  flex: none;
  padding: 1px 69px 0 0;
  background: #293955;
  color: #e6eaf2;
`;

const StatusCell = styled.span`
  width: ${props => props.$width}px;
  padding-left: 3px;
  border-left: 1px solid #97a3b8;
  line-height: 11px;
`;

const Taskbar = styled.div`
  display: flex;
  justify-content: space-between;
  height: 5px;
  flex: none;
  padding: 1px 42px 0 358px;
  overflow: hidden;
  background: #1f323f;
  color: #fff;

  span { width: 26px; background: #50656f; }
  time { line-height: 9px; }
`;

const ImeBar = styled.div`
  position: absolute;
  right: 0;
  bottom: 5px;
  display: flex;
  align-items: center;
  gap: 5px;
  height: 14px;
  padding: 0 2px 0 19px;
  background: #fff;
  color: #1673d8;
  font-size: 9px;
  font-weight: 700;

  svg { display: block; fill: currentColor; }
  > svg:first-child { position: absolute; left: -1px; top: -2px; }
`;

const Ime = () => (
  <ImeBar>
    <svg width='18' height='17' viewBox='0 0 18 17'>
      <path d='M1 3l14-3 2.500 14L3 17z' fill='#f0531e' />
      <path d='M14 4.500C10 3 6 4 6 6.200c0 2.600 7 1.800 7 4.300 0 2-4 2.600-8 1.200' fill='none' stroke='#fff' strokeWidth='2.200' />
    </svg>
    中
    <svg width='8' height='10' viewBox='0 0 8 10'><circle cx='2' cy='3' r='1.300' /><path d='M5 4.500h2.500v2L6 8.500H5l.8-2H5z' /></svg>
    <svg width='9' height='10' viewBox='0 0 9 10'><rect x='3' width='3' height='6' rx='1.500' /><path d='M1 4h1c0 4 5 4 5 0h1c0 3-1 4-3 4.300V10H4V8.300C2 8 1 7 1 4z' /></svg>
    <svg width='9' height='10' viewBox='0 0 9 10'><path fillRule='evenodd' d='M0 1h9v8H0zM1 2.500v1h1v-1zM3 2.500v1h1v-1zM5 2.500v1h1v-1zM7 2.500v1h1v-1zM1 4.500v1h1v-1zM3 4.500v1h1v-1zM5 4.500v1h1v-1zM7 4.500v1h1v-1zM2 6.700v1h5v-1z' /></svg>
    <svg width='10' height='10' viewBox='0 0 10 10'><path d='M3 1c1 1 3 1 4 0l3 2-1 2-1-.5V9.500H2v-5L1 5 0 3z' /></svg>
    <svg width='9' height='10' viewBox='0 0 9 10'><path d='M0 1h4v3.500H0zM0 5.500h4V9H0zM5 5.500h4V9H5z' /><circle cx='7' cy='2.700' r='1.900' /></svg>
  </ImeBar>
);

const menus = [['工程', 'P'], ['编辑', 'E'], ['搜索/替换', 'F'], ['转换', 'C'], ['视图', 'V'], ['在线', 'O'],
  ['调试', 'B'], ['记录', 'R'], ['诊断', 'D'], ['工具', 'T'], ['窗口', 'W'], ['帮助', 'H']];

const MenuButton = styled.button`
  &:first-of-type { margin-left: -7px; }
`;

const App = () => (
  <Window>
    <GlobalStyle />
    <TitleBar>
      <AppBadge>巧</AppBadge>
      <span>MELSOFT GX Works3 (工程未设置) - [模块参数 以太网端口]</span>
      <WindowButtons $gap={20}>
        <Icon name='minimize' size={6} /><Icon name='restore' size={6} /><Icon name='close' size={6} />
      </WindowButtons>
    </TitleBar>
    <MenuBar>
      <Grip />
      {menus.map(([text, key]) => <MenuButton key={key}>{text}(<u>{key}</u>)</MenuButton>)}
      <WindowButtons $gap={4}>
        <Icon name='minimize' size={5} /><Icon name='restore' size={5} /><Icon name='close' size={5} />
      </WindowButtons>
    </MenuBar>
    <Toolbars>
      <Toolbar>
        <Grip />
        <Tools items='new open save print | ~pages | help' />
        <Combo label='查找字符串' $width={54} />
        <More />
        <Grip />
        <Tools items='cut pages paste undo ~redo | devBlue devGreen devWhite ~pages ~note | arrowRed arrowBlue monGreen monRed ~monGreen ~monRed | redBlue ~devBlue | callout plug hand | screen ~screen | screen | zoomIn zoomOut fit' />
        <Combo label='缩放' $width={38} $grey />
        <More />
        <Grip />
        <Tools items='camera | stop check check keys' />
        <Combo label='最大' value='最大: -------' $width={74} />
        <Combo label='监视对象' $width={112} $grey />
        <More />
      </Toolbar>
      <Toolbar>
        <Grip />
        <Tools gap={1} items='*nav *link note | chip | *list list2 | bino binoList | devBlue> devBlue devRed devBlue | *clock clockList | ~hand pencil | tick cross | ~hand | devBlue> | ~bino> | find ~steps' />
        <More />
        <Grip />
        <Tools gap={1} items='~list2 ~chip ~list2 ~steps' />
        <More />
      </Toolbar>
    </Toolbars>
    <Workspace>
      <NavPanel />
      <Documents>
        <DocTabs>
          <DocTab><Icon name='label' size={8} />ProgPou [PRG] [局部标签设置]<Icon name='close' size={6} /></DocTab>
          <DocTab><Icon name='body' size={8} />ProgPou [PRG] [LD] 1步<Icon name='close' size={6} /></DocTab>
          <DocTab $active><Icon name='ether' size={8} />模块参数 以太网端口<Icon name='close' size={6} /></DocTab>
          <WindowButtons $gap={2}>
            <Icon name='triLeft' size={6} /><Icon name='triRight' size={6} /><Icon name='down' size={6} />
          </WindowButtons>
        </DocTabs>
        <Page>
          <Panes>
            <SettingList />
            <SettingDetail />
          </Panes>
        </Page>
      </Documents>
    </Workspace>
    <OutputBar><button><Icon name='window' size={9} />输出</button></OutputBar>
    <StatusBar>
      <StatusCell $width={103} />
      <StatusCell $width={81} />
      <StatusCell $width={64}>FX5U</StatusCell>
      <StatusCell $width={87}>本站-192.168.0.1</StatusCell>
      <StatusCell $width={104} />
    </StatusBar>
    <Taskbar><span /><time>20:20</time></Taskbar>
    <TargetDialog />
    <Annotations />
    <Ime />
  </Window>
);

export default App;
